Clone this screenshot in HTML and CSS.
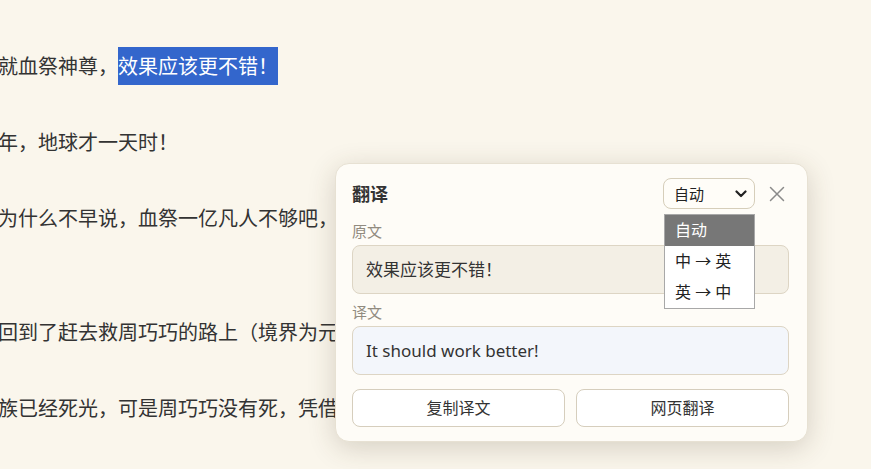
FILE: index.html
```html
<!DOCTYPE html>
<html lang="zh-CN">
<head>
    <meta charset="UTF-8">
    <meta name="viewport" content="width=device-width, initial-scale=1.0">
    <title>阅读 - 翻译</title>
    <link rel="stylesheet" href="styles.css">
</head>
<body>
    <main class="chapter">
        <p>如果当初早点就血祭神尊，<span class="picked">效果应该更不错！</span></p>
        <p>在仙界过了一年，地球才一天时！</p>
        <p>他心中暗骂：为什么不早说，血祭一亿凡人不够吧，难道还要再献祭一座城池？<br>真是坑人</p>
        <p>下一刻，他又回到了赶去救周巧巧的路上（境界为元婴期），心中满是焦急。</p>
        <p>上一世周氏家族已经死光，可是周巧巧没有死，凭借着那枚玉佩活了下来。</p>
    </main>

    <!-- translate popup -->
    <section class="translate-card">
        <header class="card-head">
            <h2 class="card-title">翻译</h2>
            <div class="lang-select">
                <select class="lang-input">
                    <option>自动</option>
                    <option>中 → 英</option>
                    <option>英 → 中</option>
                </select>
                <svg class="chevron" width="12" height="8" viewBox="0 0 12 8">
                    <path d="M1.5 1.5 L6 6 L10.5 1.5" fill="none" stroke="#222" stroke-width="2.2" stroke-linecap="round" stroke-linejoin="round"/>
                </svg>
                <ul class="lang-options">
                    <li class="active">自动</li>
                    <li>中 → 英</li>
                    <li>英 → 中</li>
                </ul>
            </div>
            <button class="close-btn" title="关闭">
                <svg width="16" height="16" viewBox="0 0 16 16">
                    <path d="M1.5 1.5 L14.5 14.5 M14.5 1.5 L1.5 14.5" stroke="#8a8a8a" stroke-width="1.5" stroke-linecap="round"/>
                </svg>
            </button>
        </header>

        <div class="field-label">原文</div>
        <div class="text-box source">效果应该更不错！</div>

        <div class="field-label">译文</div>
        <div class="text-box result">It should work better!</div>

        <div class="card-actions">
            <button class="action-btn">复制译文</button>
            <button class="action-btn">网页翻译</button>
        </div>
    </section>
</body>
</html>
```

FILE: styles.css
```css
html, body {
    margin: 0;
    height: 100%;
}
body {
    background-color: #faf6ec;
    color: #333;
    font-family: "Noto Sans CJK SC", "Noto Sans", sans-serif;
    overflow: hidden;
    position: relative;
}

/* reading column, scrolled sideways */
.chapter {
    margin-left: -122px;
    padding-top: 47px;
    font-size: 20px;
    line-height: 38px;
    white-space: nowrap;
}
.chapter p {
    margin: 0 0 38px;
}
.picked {
    display: inline-block;
    background-color: #3366cc;
    color: #fff;
}

/* popup */
.translate-card {
    position: absolute;
    left: 335px;
    top: 163px;
    width: 473px;
    box-sizing: border-box;
    padding: 14px 18px 14px 16px;
    background-color: #fefcf7;
    border: 1px solid #e7e1d3;
    border-radius: 14px;
    box-shadow: 0 6px 28px rgba(70, 55, 30, 0.2);
    font-family: "Noto Sans", "Noto Sans CJK SC", sans-serif;
}
.card-head {
    display: flex;
    align-items: center;
    gap: 10px;
    margin-bottom: 12px;
}
.card-title {
    flex: 1;
    margin: 0;
    font-size: 18px;
    font-weight: bold;
    line-height: 24px;
    color: #333;
}
.lang-select {
    position: relative;
    width: 92px;
    height: 31px;
}
.lang-input {
    appearance: none;
    width: 100%;
    height: 100%;
    box-sizing: border-box;
    margin: 0;
    padding: 0 0 0 10px;
    border: 1px solid #d6ceba;
    border-radius: 8px;
    background-color: #fffdf8;
    color: #222;
    font-family: inherit;
    font-size: 15px;
}
.chevron {
    position: absolute;
    right: 8px;
    top: 12px;
    pointer-events: none;
}
.lang-options {
    position: absolute;
    left: 1px;
    top: 36px;
    width: 91px;
    box-sizing: border-box;
    margin: 0;
    padding: 0;
    list-style: none;
    background-color: #fff;
    border: 1px solid #a8a8a8;
    font-size: 16px;
    z-index: 2;
}
.lang-options li {
    height: 31px;
    line-height: 31px;
    padding-left: 10px;
    color: #222;
}
.lang-options li.active {
    background-color: #777;
    color: #fff;
}
.close-btn {
    width: 24px;
    height: 24px;
    padding: 0;
    border: none;
    background: none;
    display: flex;
    align-items: center;
    justify-content: center;
    cursor: pointer;
}

.field-label {
    font-size: 15px;
    line-height: 20px;
    color: #918b80;
    margin-bottom: 4px;
}
.text-box {
    padding: 12px 13px;
    border: 1px solid #ddd5c4;
    border-radius: 8px;
    font-size: 17px;
    line-height: 23px;
    color: #333;
    margin-bottom: 8px;
}
.text-box.source {
    background-color: #f3efe5;
}
.text-box.result {
    background-color: #f3f6fb;
    margin-bottom: 14px;
}

.card-actions {
    display: grid;
    grid-template-columns: 1fr 1fr;
    gap: 11px;
}
.action-btn {
    padding: 7px;
    background-color: #fff;
    border: 1px solid #d6cebd;
    border-radius: 8px;
    font-family: inherit;
    font-size: 16px;
    line-height: 22px;
    color: #333;
    cursor: pointer;
}
```
